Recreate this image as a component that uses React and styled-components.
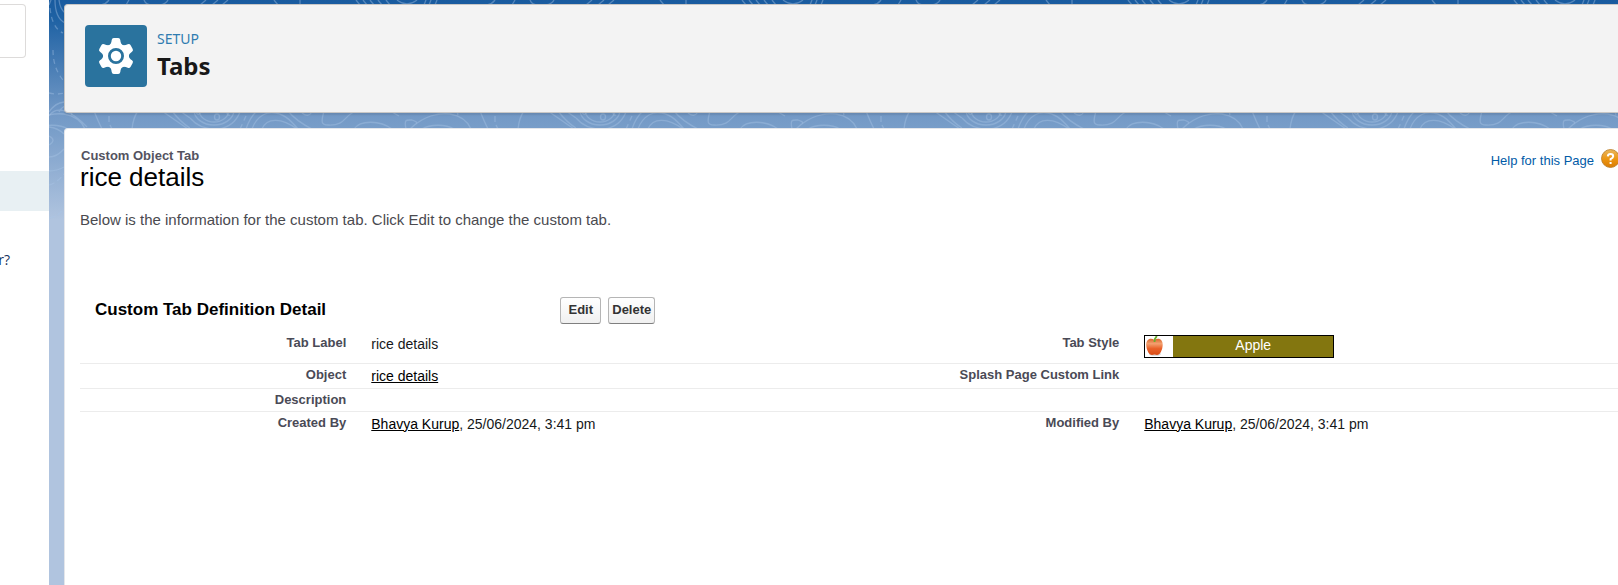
import React from "react";
import styled, { createGlobalStyle } from "styled-components";

const GlobalStyle = createGlobalStyle`
  *, *::before, *::after { box-sizing: border-box; }
  html, body { margin: 0; padding: 0; }
  body {
    background: #b0c4df;
    font-family: "Liberation Sans", Arial, sans-serif;
    font-size: 14px;
    color: #16181a;
    overflow: hidden;
  }
`;

const Page = styled.div`
  display: flex;
  min-height: 100vh;
  overflow: hidden;
`;

const Sidebar = styled.aside`
  flex: 0 0 49px;
  display: flex;
  flex-direction: column;
  background: #fff;
  overflow: hidden;
  padding-top: 4px;
`;

const SearchBox = styled.div`
  width: 26px;
  height: 54px;
  border: 1px solid #dddbda;
  border-left: 0;
  border-radius: 0 4px 4px 0;
`;

const ActiveItem = styled.div`
  height: 40px;
  margin-top: 113px;
  background: #e8f0f3;
`;

const SidebarNote = styled.p`
  display: flex;
  justify-content: flex-end;
  margin: 39px 0 0;
  padding-right: 39px;
  font: 14px/20px "Open Sans", "Noto Sans", sans-serif;
  color: #16325c;
`;

const Stage = styled.main`
  position: relative;
  flex: 1;
  min-width: 0;
  display: flex;
  flex-direction: column;
  gap: 15px;
  padding: 4px 0 0 15px;
  background: linear-gradient(#195b9f 0, #1f62a4 20px, #7399c6 114px, #799ec9 130px, #b0c4df 220px);
`;

const Contours = styled.svg`
  position: absolute;
  inset: 0;
  width: 100%;
  height: 240px;
  fill: none;
  stroke: #a9c6e6;
  stroke-opacity: 0.4;
  stroke-width: 1.3;
`;

const Header = styled.header`
  position: relative;
  display: flex;
  gap: 10px;
  height: 109px;
  padding: 20px;
  background: #f3f3f3;
  border: 1px solid #c9c7c5;
  border-right: 0;
  border-radius: 4px 0 0 4px;
  box-shadow: 0 2px 2px rgba(0, 0, 0, 0.1);
`;

const SetupIcon = styled.span`
  display: grid;
  place-items: center;
  width: 62px;
  height: 62px;
  border-radius: 4px;
  background: #2a739e;
`;

const HeaderText = styled.div`
  display: flex;
  flex-direction: column;
  padding-top: 4px;
  font-family: "Noto Sans", "Open Sans", sans-serif;
`;

const Eyebrow = styled.span`
  font-size: 14px;
  line-height: 20px;
  color: #2f7cb0;
`;

const HeaderTitle = styled.h1`
  margin: 0;
  font-size: 24px;
  line-height: 34px;
  font-weight: 700;
  color: #181818;
`;

const Panel = styled.section`
  position: relative;
  flex: 1;
  padding: 20px 0 20px 15px;
  background: #fff;
  border: 1px solid #e4e6ea;
  border-right: 0;
  border-bottom: 0;
  border-radius: 4px 0 0 0;
`;

const Content = styled.div`
  width: calc(100% + 8px);
`;

const TitleRow = styled.div`
  display: flex;
  justify-content: space-between;
`;

const ObjectType = styled.p`
  margin: 0;
  padding-left: 1px;
  font-size: 13px;
  line-height: 14px;
  font-weight: 700;
  color: #54535f;
`;

const ObjectName = styled.h2`
  margin: 0;
  font-size: 26px;
  line-height: 28px;
  font-weight: 400;
  color: #000;
`;

const HelpLink = styled.a`
  display: flex;
  gap: 7px;
  padding: 0 6px 0 0;
  font-size: 13px;
  line-height: 24px;
  color: #015ba7;
  text-decoration: none;
`;

const Intro = styled.p`
  margin: 20px 0 67px;
  font-size: 15px;
  line-height: 18px;
  color: #4a4a4f;
`;

const SectionHead = styled.div`
  display: grid;
  grid-template-columns: 31% 1fr;
  align-items: center;
  height: 28px;
`;

const SectionTitle = styled.h3`
  margin: 0;
  padding-left: 15px;
  font-size: 17px;
  line-height: 20px;
  color: #000;
`;

const Actions = styled.div`
  display: flex;
  gap: 7px;
  padding-left: 1px;
`;

const Button = styled.button`
  min-width: 41px;
  height: 27px;
  padding: 0 3px;
  border: 1px solid #b5b5b5;
  border-bottom-color: #7f7f7f;
  border-radius: 3px;
  background: linear-gradient(#fff, #f0f0f0);
  font: 700 13px/20px "Liberation Sans", Arial, sans-serif;
  color: #333;
`;

const Details = styled.table`
  width: 100%;
  margin-top: 8px;
  table-layout: fixed;
  border-collapse: collapse;
`;

const Row = styled.tr`
  height: ${(p) => p.$height}px;
  border-bottom: ${(p) => (p.$last ? "0" : "1px solid #ececec")};
`;

const Label = styled.th`
  width: 18%;
  padding: 3px 12px 0 0;
  font-size: 13px;
  line-height: 16px;
  text-align: right;
  vertical-align: top;
  color: #4a4a56;
`;

const Value = styled.td`
  width: 32%;
  padding: 3px 0 0 13px;
  font-size: 14px;
  line-height: 18px;
  vertical-align: top;
`;

const RecordLink = styled.a`
  color: #000;
  text-decoration: underline;
`;

const TabStyle = styled.span`
  display: flex;
  width: 190px;
  height: 23px;
  border: 1px solid #000;
  background: #83760f;
  color: #fff;
`;

const TabStyleIcon = styled.span`
  flex: 0 0 28px;
  background: #fff;
`;

const TabStyleName = styled.span`
  flex: 1;
  text-align: center;
`;

const teeth = [0, 60, 120, 180, 240, 300];

function Gear() {
  return (
    <svg width="36" height="38" viewBox="-18 -19 36 38" aria-hidden="true">
      <g fill="#fff">
        <circle r="13" />
        {teeth.map((a) => (
          <path
            key={a}
            transform={`rotate(${a})`}
            d="M-7 -10 C-5 -12 -4.500 -14 -4.300 -16 Q-4 -18 -2.200 -18 H2.200 Q4 -18 4.300 -16 C4.500 -14 5 -12 7 -10 Z"
          />
        ))}
      </g>
      <circle r="6.600" fill="#fff" stroke="#2a739e" strokeWidth="2.800" />
    </svg>
  );
}

function Backdrop() {
  return (
    <Contours aria-hidden="true">
      <defs>
        <pattern id="contours" x="141" y="0" width="386" height="240" patternUnits="userSpaceOnUse">
          <ellipse cx="27" cy="117" rx="2.500" ry="3" />
          <ellipse cx="24" cy="110" rx="15" ry="12" />
          <ellipse cx="24" cy="110" rx="20" ry="15" />
          <path d="M0 118 Q10 130 28 129 Q44 127 50 112 M386 118 L376 111 M6 112 q2 5 5 0 M37 112 q0 4 3 3" />
          <path d="M56 116 L50 129" strokeDasharray="5 4" />
          <path d="M56 129 Q60 117 67 111 M62 129 C67 115 78 111 86 113 C96 115 102 122 108 129 M72 129 C77 117 92 118 107 129" />
          <path d="M98 111 Q106 121 122 129 M112 113 Q118 118 122 112" />
          <path d="M134 111 C131 122 131 125 138 125 C156 126 154 115 166 111" />
          <path d="M164 129 C170 120 190 120 202 129 M202 112 L209 116" />
          <path d="M216 129 C214 119 216 120 222 120 Q228 122 226 123" />
          <path d="M220 129 C234 115 250 113 260 114 C272 116 278 122 281 129 M232 129 C240 124 256 124 264 129 M267 111 l1 4" />
          <path d="M290 111 Q294 121 298 129 M305 116 v6 M306 125 l2 4" />
          <path d="M328 129 C329 119 331 115 334 111 M358 111 L384 129 M368 111 Q378 124 388 129" />
          <path d="M166 0 l4 5 M173 0 l4 5 M180 0 l4 5 M188 0 l4 5 M196 0 l4 5 M207 0 q10 8 20 0 M236 0 l-2 5 M241 0 l-2 5 M247 0 l-2 5" />
          <path d="M305 0 q-3 4 -8 5 M325 0 l-3 5 M340 0 q2 5 8 5 M364 0 q-2 4 -8 5 M10 5 l6 -5 M22 5 l6 -5 M32 5 l6 -5 M84 0 l4 5 M110 0 v5" />
        </pattern>
      </defs>
      <rect width="100%" height="240" fill="url(#contours)" stroke="none" />
      <path d="M6 0 C6 12 10 20 16 23 M10 0 Q11 9 16 13" />
      <path d="M1 8 Q3 28 14 33 M4 50 Q4 68 14 80 M0 93 Q8 95 16 93" strokeDasharray="5 4" />
      <path d="M0 116 C8 104 24 112 38 127 M0 112 Q6 103 15 102 M10 112 Q14 104 22 106" />
      <path d="M0 127 Q9 128 15 134 M0 136 Q8 140 0 145 M0 157 Q8 157 15 149 M0 171 Q8 171 15 167" />
      <path d="M0 185 Q8 183 15 174 M0 218 Q8 217 15 209" strokeDasharray="6 3" />
    </Contours>
  );
}

function HelpIcon() {
  return (
    <svg width="19" height="20" viewBox="0 0 19 20" aria-hidden="true">
      <defs>
        <linearGradient id="help" x1="0" y1="0" x2="0" y2="1">
          <stop offset="0" stopColor="#e9b65c" />
          <stop offset="0.550" stopColor="#ec940f" />
          <stop offset="1" stopColor="#d97c06" />
        </linearGradient>
      </defs>
      <circle cx="9.500" cy="9.500" r="9" fill="url(#help)" stroke="#b87a22" strokeWidth="0.800" />
      <path d="M6.800 7.300 Q7 5 9.500 5 Q12.200 5 12.200 7.300 Q12.200 8.800 9.600 10.200 V11.500 M9.600 13 V15" fill="none" stroke="#fff" strokeWidth="2" />
    </svg>
  );
}

function Apple() {
  return (
    <svg width="20" height="21" viewBox="0 0 20 21" aria-hidden="true">
      <defs>
        <linearGradient id="apple" x1="0" y1="0" x2="0" y2="1">
          <stop offset="0" stopColor="#d9652b" />
          <stop offset="0.300" stopColor="#f3a070" />
          <stop offset="0.600" stopColor="#e9622a" />
          <stop offset="1" stopColor="#d94a14" />
        </linearGradient>
      </defs>
      <ellipse cx="10" cy="18" rx="6" ry="2" fill="#dcdcdc" />
      <path d="M9.500 4 C5 1 1 4 1.200 9 C1.500 14 4 19 7 19 Q9.500 18 12 19 C15 19 17.500 14 17.700 9 C18 4 14 1 9.500 4 Z" fill="url(#apple)" />
      <path d="M9.500 6 Q9.500 2 12 0" fill="none" stroke="#6cae2e" strokeWidth="1.800" />
    </svg>
  );
}

function Author() {
  return (
    <>
      <RecordLink href="#user">Bhavya Kurup</RecordLink>, 25/06/2024, 3:41 pm
    </>
  );
}

const rows = [
  {
    height: 31,
    cells: [
      ["Tab Label", "rice details"],
      [
        "Tab Style",
        <TabStyle key="style">
          <TabStyleIcon><Apple /></TabStyleIcon>
          <TabStyleName>Apple</TabStyleName>
        </TabStyle>,
      ],
    ],
  },
  {
    height: 25,
    cells: [
      ["Object", <RecordLink key="object" href="#object">rice details</RecordLink>],
      ["Splash Page Custom Link", ""],
    ],
  },
  { height: 23, cells: [["Description", ""], ["", ""]] },
  { height: 25, cells: [["Created By", <Author key="c" />], ["Modified By", <Author key="m" />]] },
];

export default function App() {
  return (
    <>
      <GlobalStyle />
      <Page>
        <Sidebar>
          <SearchBox />
          <ActiveItem />
          <SidebarNote>r?</SidebarNote>
        </Sidebar>
        <Stage>
          <Backdrop />
          <Header>
            <SetupIcon><Gear /></SetupIcon>
            <HeaderText>
              <Eyebrow>SETUP</Eyebrow>
              <HeaderTitle>Tabs</HeaderTitle>
            </HeaderText>
          </Header>
          <Panel>
            <Content>
              <TitleRow>
                <div>
                  <ObjectType>Custom Object Tab</ObjectType>
                  <ObjectName>rice details</ObjectName>
                </div>
                <HelpLink href="#help">
                  Help for this Page
                  <HelpIcon />
                </HelpLink>
              </TitleRow>
              <Intro>Below is the information for the custom tab. Click Edit to change the custom tab.</Intro>
              <SectionHead>
                <SectionTitle>Custom Tab Definition Detail</SectionTitle>
                <Actions>
                  <Button type="button">Edit</Button>
                  <Button type="button">Delete</Button>
                </Actions>
              </SectionHead>
              <Details>
                <tbody>
                  {rows.map((row, i) => (
                    <Row key={i} $height={row.height} $last={i === rows.length - 1}>
                      {row.cells.map(([label, value], j) => (
                        <React.Fragment key={j}>
                          <Label scope="row">{label}</Label>
                          <Value>{value}</Value>
                        </React.Fragment>
                      ))}
                    </Row>
                  ))}
                </tbody>
              </Details>
            </Content>
          </Panel>
        </Stage>
      </Page>
    </>
  );
}
